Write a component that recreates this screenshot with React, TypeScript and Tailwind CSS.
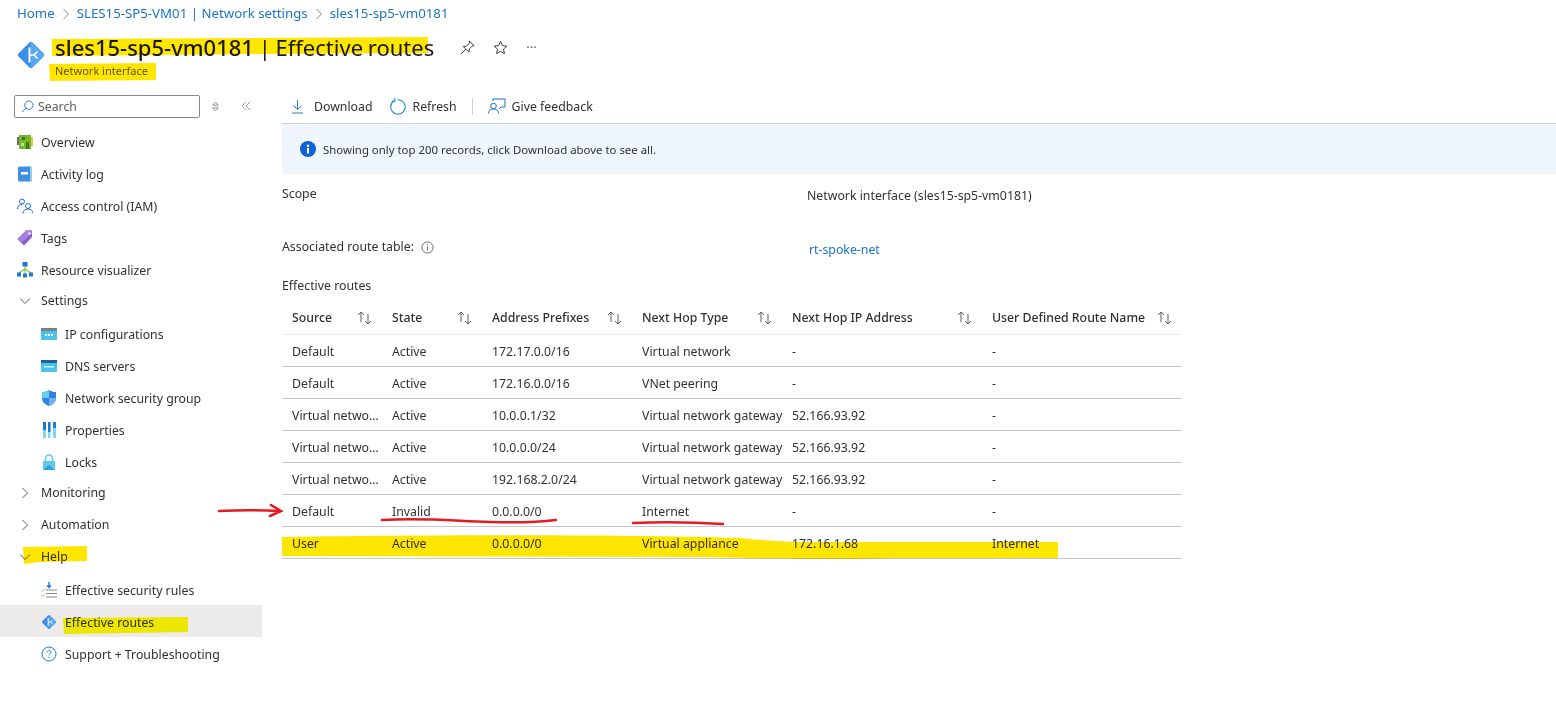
import { ReactNode } from "react";

const Chevron = ({ open }: { open?: boolean }) => (
  <svg viewBox="0 0 12 12" className="w-3 h-3" fill="none" stroke="#605e5c" strokeWidth="1">
    {open ? <path d="M1 3.5l5 5 5-5" /> : <path d="M3.5 1l5 5-5 5" />}
  </svg>
);

const Sort = () => (
  <svg viewBox="0 0 18 14" className="w-[18px] h-[14px]" fill="none" stroke="#605e5c" strokeWidth="1">
    <path d="M5 11V1M2 4l3-3 3 3" />
    <path d="M12 3v10M9 10l3 3 3-3" />
  </svg>
);

const NicIcon = ({ size }: { size: string }) => (
  <svg viewBox="0 0 30 30" className={size}>
    <rect x="5" y="5" width="20" height="20" rx="2.5" transform="rotate(45 15 15)" fill="#3b8fe8" />
    <path d="M15 1.500L28.500 15 15 28.500z" fill="#5ba8f2" />
    <path d="M13.500 7.500v15" stroke="#fff" strokeWidth="2" />
    <path d="M13.500 15h4.500l3.500-3.500M18 15l3.500 3.500" stroke="#fff" strokeWidth="1.600" fill="none" />
  </svg>
);

const icons: Record<string, ReactNode> = {
  overview: (
    <svg viewBox="0 0 16 16" className="w-4 h-4">
      <rect x="0" y="3" width="2" height="8" fill="#6b6b6b" />
      <rect x="2" y="1" width="12" height="14" fill="#76b82a" />
      <rect x="14" y="3" width="2" height="9" fill="#e8c33c" />
      <rect x="5" y="3" width="3" height="3" fill="#3f7a1a" />
      <rect x="9" y="8" width="3" height="7" fill="#3f7a1a" />
      <rect x="4" y="9" width="3" height="3" fill="#c6e08f" />
    </svg>
  ),
  log: (
    <svg viewBox="0 0 16 16" className="w-4 h-4">
      <rect x="1" y="0.5" width="14" height="15" rx="1.5" fill="#3f8fdc" />
      <rect x="13" y="0.5" width="2" height="15" fill="#9cc9ee" />
      <rect x="4" y="6" width="7" height="2.5" fill="#fff" />
    </svg>
  ),
  iam: (
    <svg viewBox="0 0 16 16" className="w-4 h-4" fill="none" stroke="#1b6fd0" strokeWidth="1">
      <circle cx="5" cy="3.5" r="2.5" />
      <circle cx="11" cy="8" r="2.5" />
      <path d="M0.5 11c0-3 2-4.5 4.5-4.5M6 15.5c0-3 2-4.5 5-4.5s5 1.500 5 4.500" />
    </svg>
  ),
  tags: (
    <svg viewBox="0 0 16 16" className="w-4 h-4">
      <path d="M9 .5h6v6.500L7 15.500.5 9z" fill="#8a5cc9" />
      <path d="M9 .5h6v3L4 13 .5 9z" fill="#a77fe0" />
      <circle cx="12.500" cy="3.500" r="1.200" fill="#fff" />
    </svg>
  ),
  visual: (
    <svg viewBox="0 0 16 16" className="w-4 h-4">
      <path d="M8 4v10M2 11l6-4 6 4" stroke="#86c440" strokeWidth="1.200" fill="none" />
      <rect x="5.500" y="0" width="5" height="4.500" fill="#1f78d1" />
      <rect x="0" y="10.500" width="4" height="4" fill="#1f78d1" />
      <rect x="6" y="11.500" width="4" height="4" fill="#1f78d1" />
      <rect x="12" y="10.500" width="4" height="4" fill="#1f78d1" />
    </svg>
  ),
  ip: (
    <svg viewBox="0 0 16 12" className="w-4 h-3">
      <rect width="16" height="12" fill="#47c3ec" />
      <rect width="16" height="3" fill="#7a7f85" />
      <rect x="4" y="6" width="2" height="2" fill="#fff" />
      <rect x="7" y="6" width="2" height="2" fill="#fff" />
      <rect x="10" y="6" width="2" height="2" fill="#fff" />
    </svg>
  ),
  dns: (
    <svg viewBox="0 0 16 12" className="w-4 h-3">
      <rect width="16" height="12" fill="#47c3ec" />
      <rect width="16" height="3" fill="#1f5f9e" />
      <rect x="3" y="6" width="10" height="1.500" fill="#d6f3fc" />
    </svg>
  ),
  nsg: (
    <svg viewBox="0 0 16 16" className="w-4 h-4">
      <path d="M8 0c2 1.500 4 2 7 2v6c0 4-3 6.500-7 8-4-1.500-7-4-7-8V2c3 0 5-.5 7-2z" fill="#2f80e0" />
      <path d="M8 0v8H1V2c3 0 5-.5 7-2z" fill="#5fd0f0" />
      <path d="M8 8h7c0 4-3 6.500-7 8z" fill="#6fb1f0" />
    </svg>
  ),
  props: (
    <svg viewBox="0 0 16 16" className="w-4 h-4">
      <rect x="2" y="0" width="3" height="16" fill="#7fd6f2" />
      <rect x="2" y="0" width="3" height="8" fill="#1f78d1" />
      <rect x="7" y="0" width="2.500" height="16" fill="#7fd6f2" />
      <rect x="7" y="0" width="2.500" height="10" fill="#1f78d1" />
      <rect x="12" y="0" width="3" height="16" fill="#7fd6f2" />
      <rect x="12" y="0" width="3" height="6" fill="#1f78d1" />
    </svg>
  ),
  locks: (
    <svg viewBox="0 0 16 16" className="w-4 h-4">
      <path d="M4.500 7V4.500a3.500 3.500 0 0 1 7 0V7" fill="none" stroke="#5fc8ee" strokeWidth="1.600" />
      <rect x="2" y="7" width="12" height="9" fill="#5fc8ee" />
      <path d="M2 16l6-5 6 5z" fill="#2f9fd8" />
    </svg>
  ),
  rules: (
    <svg viewBox="0 0 16 16" className="w-4 h-4" fill="none">
      <path d="M8 0v5M6 3.500l2 2 2-2" stroke="#1f78d1" strokeWidth="1.400" />
      <path d="M5 8h11M5 11.500h11M5 15h11" stroke="#8a8886" strokeWidth="1" />
      <path d="M0 8l1.500 1.500L4 7M0 13l1.500 1.500L4 12" stroke="#a4cf5b" strokeWidth="1" />
    </svg>
  ),
  routes: <NicIcon size="w-[18px] h-[18px]" />,
  help: (
    <svg viewBox="0 0 16 16" className="w-4 h-4" fill="none">
      <circle cx="8" cy="8" r="7" stroke="#1b7fd6" strokeWidth="1" />
      <path d="M6 6.300c0-1.200 1-1.900 2-1.900s2 .7 2 1.800c0 1.600-2 1.500-2 3.200" stroke="#1b7fd6" strokeWidth="1" />
      <circle cx="8" cy="11.500" r=".7" fill="#1b7fd6" />
    </svg>
  ),
};

const Item = ({ icon, label, sub, active }: { icon: string; label: string; sub?: boolean; active?: boolean }) => (
  <div className={`flex items-center h-8 ${sub ? "pl-[41px]" : "pl-[17px]"} ${active ? "bg-[#edebe9]" : ""}`}>
    <span className="w-4 flex justify-center mt-px">{icons[icon]}</span>
    <span className="ml-2 mt-[4px] whitespace-nowrap">{label}</span>
  </div>
);

const Group = ({ label, open }: { label: string; open?: boolean }) => (
  <div className="flex items-center h-8 pl-[19px]">
    <Chevron open={open} />
    <span className="ml-[10px]">{label}</span>
  </div>
);

const columns = ["Source", "State", "Address Prefixes", "Next Hop Type", "Next Hop IP Address", "User Defined Route Name"];

const rows = [
  ["Default", "Active", "172.17.0.0/16", "Virtual network", "-", "-"],
  ["Default", "Active", "172.16.0.0/16", "VNet peering", "-", "-"],
  ["Virtual netwo...", "Active", "10.0.0.1/32", "Virtual network gateway", "52.166.93.92", "-"],
  ["Virtual netwo...", "Active", "10.0.0.0/24", "Virtual network gateway", "52.166.93.92", "-"],
  ["Virtual netwo...", "Active", "192.168.2.0/24", "Virtual network gateway", "52.166.93.92", "-"],
  ["Default", "Invalid", "0.0.0.0/0", "Internet", "-", "-"],
  ["User", "Active", "0.0.0.0/0", "Virtual appliance", "172.16.1.68", "Internet"],
];

const gridCols = "grid grid-cols-[100px_100px_150px_150px_200px_200px]";

export default function App() {
  return (
    <div className="relative w-[1556px] h-[713px] overflow-hidden bg-white text-[#323130] text-[12.3px] font-['Noto_Sans','Open_Sans',sans-serif]">
      {/* breadcrumb */}
      <div className="flex items-center h-7 pl-[17px] text-[13.25px] text-[#1b74c4]">
        <span>Home</span>
        <svg viewBox="0 0 8 12" className="w-2 h-3 mx-[7px]" fill="none" stroke="#8a8886"><path d="M1.500 1l5 5-5 5" /></svg>
        <span>SLES15-SP5-VM01 | Network settings</span>
        <svg viewBox="0 0 8 12" className="w-2 h-3 mx-[7px]" fill="none" stroke="#8a8886"><path d="M1.500 1l5 5-5 5" /></svg>
        <span>sles15-sp5-vm0181</span>
      </div>

      {/* title */}
      <div className="flex items-start h-[61px] pl-[16px] pt-[4px]">
        <div className="pt-[8px]"><NicIcon size="w-[30px] h-[30px]" /></div>
        <div className="ml-[9px]">
          <div className="flex items-center h-[30px]">
            <span className="text-[22px] leading-[30px] text-[#1b1a19] whitespace-nowrap [word-spacing:-1px]"><span className="font-medium">sles15-sp5-vm0181</span> | Effective routes</span>
            <svg viewBox="0 0 16 16" className="w-[15px] h-[15px] ml-[26px]" fill="none" stroke="#323130"><path d="M10 1l5 5-2 .5-3 3 -.5 3.500-6-6 3.500-.5 3-3zM6 10l-5 5" /></svg>
            <svg viewBox="0 0 16 16" className="w-[15px] h-[15px] ml-[18px]" fill="none" stroke="#323130"><path d="M8 1.500l2 4.500 4.800.5-3.600 3.200 1 4.800L8 12l-4.200 2.500 1-4.800L1.200 6.500 6 6z" /></svg>
            <span className="ml-[18px] text-[#605e5c] text-[13px] leading-none">···</span>
          </div>
          <div className="text-[11px] text-[#605e5c] leading-[18px]">Network interface</div>
        </div>
      </div>

      <div className="flex">
        {/* sidebar */}
        <div className="w-[262px] shrink-0">
          <div className="flex items-center h-[34px] mb-[2px] pl-[14px]">
            <div className="flex items-center w-[186px] h-[23px] border border-[#8a8886] rounded-[2px] pl-[6px] text-[#605e5c]">
              <svg viewBox="0 0 14 14" className="w-[13px] h-[13px]" fill="none" stroke="#1b74c4"><circle cx="8.500" cy="5.500" r="4.500" /><path d="M5.500 8.500L1 13" /></svg>
              <span className="ml-[4px] mt-[2px]">Search</span>
            </div>
            <svg viewBox="0 0 10 12" className="w-[9px] h-[11px] ml-[11px]" fill="none" stroke="#8a8886"><path d="M5 1l3 3.500H2zM5 11l3-3.500H2z" /></svg>
            <svg viewBox="0 0 12 12" className="w-[10px] h-[10px] ml-[21px]" fill="none" stroke="#8a8886"><path d="M6 1L1 6l5 5M11 1L6 6l5 5" /></svg>
          </div>
          <Item icon="overview" label="Overview" />
          <Item icon="log" label="Activity log" />
          <Item icon="iam" label="Access control (IAM)" />
          <Item icon="tags" label="Tags" />
          <Item icon="visual" label="Resource visualizer" />
          <Group label="Settings" open />
          <Item icon="ip" label="IP configurations" sub />
          <Item icon="dns" label="DNS servers" sub />
          <Item icon="nsg" label="Network security group" sub />
          <Item icon="props" label="Properties" sub />
          <Item icon="locks" label="Locks" sub />
          <Group label="Monitoring" />
          <Group label="Automation" />
          <Group label="Help" open />
          <Item icon="rules" label="Effective security rules" sub />
          <Item icon="routes" label="Effective routes" sub active />
          <Item icon="help" label="Support + Troubleshooting" sub />
        </div>

        {/* content */}
        <div className="ml-[20px] flex-1">
          <div className="flex items-center h-[34px] pl-[9px]">
            <svg viewBox="0 0 14 16" className="w-[13px] h-[15px]" fill="none" stroke="#1b74c4"><path d="M7 1v10M2.500 7L7 11l4.500-4M1 15h12" /></svg>
            <span className="ml-[10px] mt-[2px]">Download</span>
            <svg viewBox="0 0 16 16" className="w-[17px] h-[17px] ml-[16px]" fill="none" stroke="#1b7fd6"><path d="M5 2.500a6.800 6.800 0 1 0 3-.9M5.500 0v3H2.500" /></svg>
            <span className="ml-[7px] mt-[2px]">Refresh</span>
            <span className="w-px h-[17px] bg-[#d2d0ce] ml-[15px]" />
            <svg viewBox="0 0 18 16" className="w-[18px] h-[16px] ml-[15px]" fill="none" stroke="#1b74c4"><circle cx="5.500" cy="8" r="2.800" /><path d="M.5 15.500c0-3 2-4.500 5-4.500s5 1.500 5 4.500M5 3V1h12v8h-4l-2 2" /></svg>
            <span className="ml-[6px] mt-[2px]">Give feedback</span>
          </div>
          <div className="flex items-center h-[51px] pl-[18px] bg-[#eff6fd] border-t border-[#d2d0ce]">
            <svg viewBox="0 0 16 16" className="w-[16px] h-[16px]"><circle cx="8" cy="8" r="8" fill="#0f62d6" /><rect x="7" y="7" width="2" height="5.500" fill="#fff" /><circle cx="8" cy="4.700" r="1.200" fill="#fff" /></svg>
            <span className="ml-[7px] mt-[2px] text-[11.4px]">Showing only top 200 records, click Download above to see all.</span>
          </div>
          <div className="flex h-[54px] pt-[11px]">
            <span className="w-[525px] leading-[18px]">Scope</span>
            <span className="leading-[22px]">Network interface (sles15-sp5-vm0181)</span>
          </div>
          <div className="flex items-center h-[36px] pt-[2px]">
            <span className="flex items-center w-[527px]">
              Associated route table:
              <svg viewBox="0 0 14 14" className="w-[13px] h-[13px] ml-[7px]" fill="none" stroke="#605e5c"><circle cx="7" cy="7" r="6" /><path d="M7 6v4.500M7 3.500v1.200" /></svg>
            </span>
            <span className="text-[#1b74c4] mt-[6px]">rt-spoke-net</span>
          </div>
          <div className="h-[20px] mt-[12px] leading-[20px]">Effective routes</div>
          <div className="w-[900px] mt-[5px]">
            <div className={`${gridCols} h-[34px] items-center font-medium border-b border-[#edebe9]`}>
              {columns.map((c) => (
                <div key={c} className="flex items-center justify-between pl-[10px] pr-[8px] whitespace-nowrap">
                  <span className="mt-[2px]">{c}</span>
                  <Sort />
                </div>
              ))}
            </div>
            {rows.map((r, i) => (
              <div key={i} className={`${gridCols} h-8 items-center border-b border-[#c8c6c4]`}>
                {r.map((v, j) => (
                  <div key={j} className="pl-[10px] pt-[3px] whitespace-nowrap">{v}</div>
                ))}
              </div>
            ))}
          </div>
        </div>
      </div>

      {/* marker annotations drawn over the page */}
      <svg viewBox="0 0 1556 713" className="absolute inset-0 w-[1556px] h-[713px] pointer-events-none mix-blend-multiply">
        <path d="M52 39L428 37 428 53 260 54 52 56z" fill="#ffe600" />
        <path d="M49 64L156 63 156 80 50 81z" fill="#ffe600" />
        <path d="M23 547L87 546 87 561 40 562 24 564z" fill="#ffe600" />
        <path d="M63 618L188 617 188 632 64 634z" fill="#fffa00" />
        <path d="M282 537C400 535 600 534 740 538C760 540 780 542 800 542L1058 542 1058 558 900 558C800 560 750 558 700 557L282 556z" fill="#ffe600" />
        <path d="M219 511C240 510 258 510 279 511M271 505L281 511 270 516" fill="none" stroke="#e51b24" strokeWidth="2.500" strokeLinecap="round" />
        <path d="M382 520C420 518 440 520 490 522C520 523 540 522 556 520" fill="none" stroke="#e51b24" strokeWidth="2.500" strokeLinecap="round" />
        <path d="M633 523C660 522 690 522 723 524" fill="none" stroke="#e51b24" strokeWidth="2.500" strokeLinecap="round" />
      </svg>
    </div>
  );
}
